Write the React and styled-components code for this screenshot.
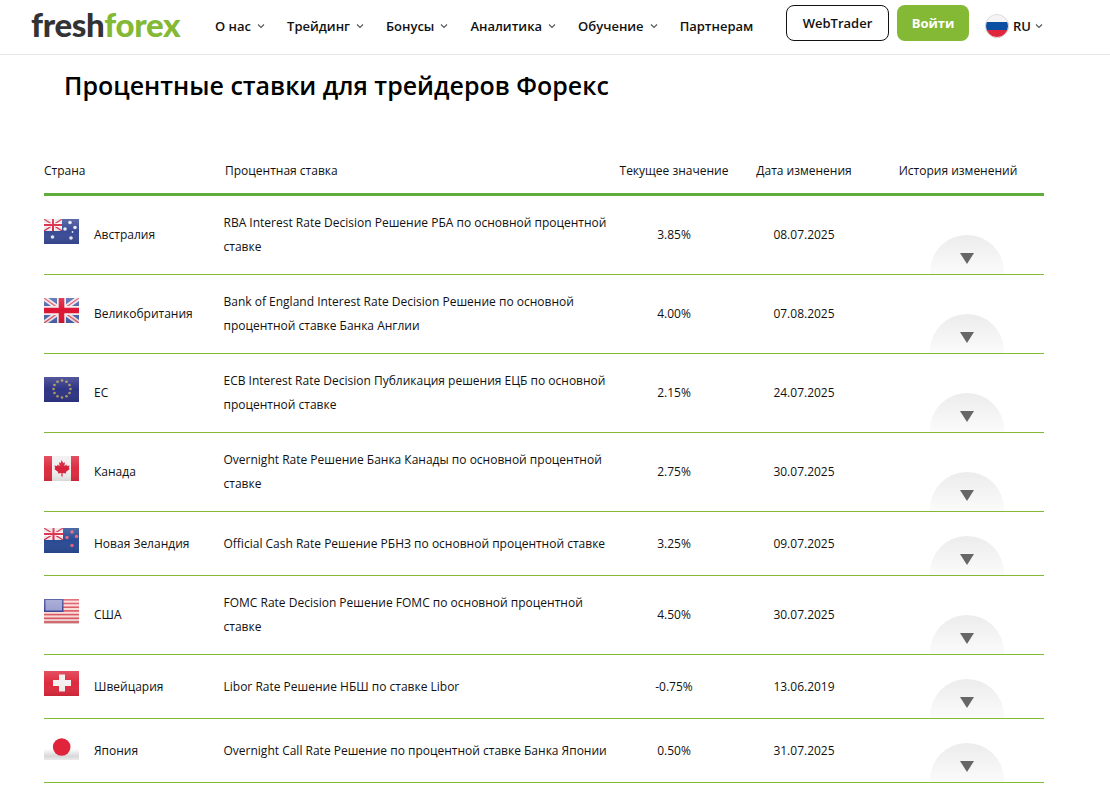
import React from 'react';
import styled, { createGlobalStyle } from 'styled-components';

const GlobalStyle = createGlobalStyle`
  html, body {
    margin: 0;
    padding: 0;
    background: #fff;
    color: #000;
    font-family: "Open Sans", "Noto Sans", sans-serif;
  }
`;

const Header = styled.header`
  height: 54px;
  border-bottom: 1px solid #e8e8e8;
  display: flex;
  align-items: center;
  padding-left: 31px;
`;

const Logo = styled.a`
  font-family: "Lato", "Open Sans", sans-serif;
  font-weight: 900;
  font-size: 33px;
  line-height: 1;
  letter-spacing: -0.3px;
  color: #333;
  width: 184px;
  margin-top: -6px;
  span { color: #84b935; }
`;

const Nav = styled.nav`
  display: flex;
  align-items: center;
  gap: 22px;
  width: 571px;
`;

const NavItem = styled.a`
  display: flex;
  align-items: center;
  gap: 6px;
  font-size: 13px;
  font-weight: 600;
  color: #111;
  margin-top: -3px;
`;

const Chevron = () => (
  <svg width="8" height="6" viewBox="0 0 8 6" fill="none" stroke="#555" strokeWidth="1.1">
    <path d="M1 1.5l3 3 3-3" />
  </svg>
);

const OutlineButton = styled.a`
  box-sizing: border-box;
  width: 103px;
  height: 36px;
  border: 1px solid #111;
  border-radius: 8px;
  display: flex;
  align-items: center;
  justify-content: center;
  font-size: 13px;
  font-weight: 600;
  color: #111;
  margin-top: -9px;
`;

const LoginButton = styled.a`
  width: 72px;
  height: 36px;
  margin-left: 8px;
  margin-top: -9px;
  border-radius: 8px;
  background: #84b935;
  color: #fff;
  display: flex;
  align-items: center;
  justify-content: center;
  font-size: 13px;
  font-weight: 700;
`;

const Lang = styled.div`
  display: flex;
  align-items: center;
  gap: 4px;
  margin-left: 16px;
  margin-top: -2px;
  font-size: 13px;
  font-weight: 600;
  color: #111;
`;

const Title = styled.h1`
  margin: 0;
  padding: 13px 0 0 64px;
  font-size: 25px;
  line-height: 34px;
  font-weight: 600;
  color: #000;
`;

const Table = styled.div`
  margin: 44px 66px 0 44px;
`;

const columns = '180px 387px 126px 134px 173px';

const HeadRow = styled.div`
  display: grid;
  grid-template-columns: ${columns};
  height: 50px;
  padding-top: 2px;
  align-items: center;
  border-bottom: 3px solid #5fae3c;
  font-size: 12px;
  color: #111;
  box-sizing: border-box;
`;

const HeadCell = styled.div`
  text-align: ${props => (props.$center ? 'center' : 'left')};
  padding-left: ${props => props.$indent || 0}px;
  white-space: nowrap;
`;

const Row = styled.div`
  display: grid;
  grid-template-columns: ${columns};
  min-height: 63px;
  align-items: center;
  border-bottom: 1px solid #84b935;
  font-size: 12px;
  color: #111;
`;

const Country = styled.div`
  display: flex;
  align-items: center;
  padding-bottom: 1px;
`;

const FlagBox = styled.div`
  width: 35px;
  height: 25px;
  margin-right: 15px;
  position: relative;
  top: -3px;
  svg { display: block; }
`;

const RateName = styled.div`
  line-height: 24px;
  padding: 15px 0;
  margin-left: -0.5px;
`;

const Value = styled.div`
  text-align: center;
  padding-bottom: 1px;
`;

const ToggleCell = styled.div`
  align-self: end;
  display: flex;
  justify-content: center;
  padding-left: 18px;
`;

const Toggle = styled.button`
  width: 74px;
  height: 39px;
  border: 0;
  padding: 18px 0 10px;
  border-radius: 37px 37px 0 0;
  background: linear-gradient(#ececec, #fbfbfb);
  display: block;
`;

const Triangle = styled.span`
  display: block;
  margin: 0 auto;
  width: 0;
  height: 0;
  border-left: 7.5px solid transparent;
  border-right: 7.5px solid transparent;
  border-top: 11px solid #666;
`;

const Gloss = () => (
  <>
    <defs>
      <linearGradient id="gloss" x1="0" y1="0" x2="0" y2="1">
        <stop offset="0" stopColor="#fff" stopOpacity="0.18" />
        <stop offset="0.5" stopColor="#fff" stopOpacity="0" />
        <stop offset="1" stopColor="#000" stopOpacity="0.1" />
      </linearGradient>
    </defs>
    <rect width="35" height="25" fill="url(#gloss)" />
  </>
);

const Stars = ({ points, fill, r = 1.3 }) =>
  points.map(([x, y], i) => <circle key={i} cx={x} cy={y} r={r} fill={fill} />);

const Jack = ({ w = 18, h = 12 }) => (
  <svg x="0" y="0" width={w} height={h} viewBox="0 0 18 12" preserveAspectRatio="none">
    <rect width="18" height="12" fill="#e9e6ea" />
    <path d="M0 0L18 12M18 0L0 12" stroke="#d8233f" strokeWidth="1.2" />
    <path d="M9 0V12M0 6H18" stroke="#fff" strokeWidth="3.4" />
    <path d="M9 0V12M0 6H18" stroke="#d8233f" strokeWidth="2" />
  </svg>
);

const flags = {
  au: (
    <>
      <rect width="35" height="25" fill="#3a4b96" />
      <Jack />
      <Stars points={[[8.5, 18], [26, 3.5], [31, 8.5], [21, 10], [27, 19]]} fill="#e6e9f4" r={1.8} />
      <circle cx="28.5" cy="13" r="0.9" fill="#e6e9f4" />
    </>
  ),
  gb: (
    <>
      <rect width="35" height="25" fill="#4a63ad" />
      <path d="M0 0L35 25M35 0L0 25" stroke="#f0e4e6" strokeWidth="5" />
      <path d="M0 0L35 25M35 0L0 25" stroke="#e0526a" strokeWidth="1.2" />
      <path d="M17.5 0V25M0 12.5H35" stroke="#f3eeee" strokeWidth="9" />
      <path d="M17.5 0V25M0 12.5H35" stroke="#dc1433" strokeWidth="5.6" />
    </>
  ),
  eu: (
    <>
      <rect width="35" height="25" fill="#2f3485" />
      <Stars
        points={[[18, 3.5], [22.5, 4.7], [25.5, 8], [26.5, 12], [25.5, 16], [22.5, 19.3], [18, 20.5], [13.5, 19.3], [10.5, 16], [9.5, 12], [10.5, 8], [13.5, 4.7]]}
        fill="#a99d5c"
      />
    </>
  ),
  ca: (
    <>
      <rect width="35" height="25" fill="#f1eeee" />
      <rect width="8" height="25" fill="#dd2c40" />
      <rect x="27" width="8" height="25" fill="#dd2c40" />
      <path d="M17.5 4l1.8 3 1.7-.8-.6 4 2-1.6.6 1.4 2.6-.4-.8 2.6 1 .7-4 3.2.4 1.4-3.6-.5v3.5h-1.2v-3.5l-3.6.5.4-1.4-4-3.2 1-.7-.8-2.6 2.6.4.6-1.4 2 1.6-.6-4 1.7.8z" fill="#d8203a" />
    </>
  ),
  nz: (
    <>
      <rect width="35" height="25" fill="#2a4a94" />
      <Jack w={19} h={12} />
      <Stars points={[[28, 4], [32.5, 8.5], [23, 9.5], [28, 17.5]]} fill="#e8607a" r={1.7} />
    </>
  ),
  us: (
    <>
      <rect width="35" height="25" fill="#f9dcd8" />
      {[0, 1, 2, 3, 4, 5, 6].map(i => (
        <rect key={i} y={i * 3.7} width="35" height="1.6" fill="#dc5563" />
      ))}
      <rect width="19.5" height="13" fill="#3d4796" />
      <rect x="1.5" y="1" width="16.5" height="10.5" fill="#9a9fd0" />
    </>
  ),
  ch: (
    <>
      <rect width="35" height="25" fill="#dd2a3e" />
      <path d="M15 3.5h6v5.5h6v6h-6v5.5h-6V15H9V9h6z" fill="#f4f0f0" />
    </>
  ),
  jp: (
    <>
      <defs>
        <linearGradient id="jpbg" x1="0" y1="0" x2="0" y2="1">
          <stop offset="0" stopColor="#fff" />
          <stop offset="0.55" stopColor="#fff" />
          <stop offset="0.85" stopColor="#d8d8d8" />
          <stop offset="1" stopColor="#ececec" />
        </linearGradient>
      </defs>
      <rect width="35" height="25" fill="url(#jpbg)" />
      <circle cx="17.7" cy="12" r="8.8" fill="#e0243c" />
    </>
  ),
};

const Flag = ({ code }) => (
  <svg width="35" height="25" viewBox="0 0 35 25">
    {flags[code]}
    {code !== 'jp' && <Gloss />}
  </svg>
);

const RussianFlag = () => (
  <svg width="24" height="24" viewBox="0 0 24 24">
    <defs>
      <clipPath id="ruclip"><circle cx="12" cy="12" r="11.5" /></clipPath>
    </defs>
    <g clipPath="url(#ruclip)">
      <rect width="24" height="8" fill="#f4f4f4" />
      <rect y="8" width="24" height="8" fill="#0b4ea2" />
      <rect y="16" width="24" height="8" fill="#e0263c" />
    </g>
    <circle cx="12" cy="12" r="11.5" fill="none" stroke="#ddd" />
  </svg>
);

const menu = [
  { label: 'О нас', arrow: true },
  { label: 'Трейдинг', arrow: true },
  { label: 'Бонусы', arrow: true },
  { label: 'Аналитика', arrow: true },
  { label: 'Обучение', arrow: true },
  { label: 'Партнерам' },
];

const rates = [
  { code: 'au', country: 'Австралия', name: 'RBA Interest Rate Decision Решение РБА по основной процентной ставке', value: '3.85%', date: '08.07.2025' },
  { code: 'gb', country: 'Великобритания', name: 'Bank of England Interest Rate Decision Решение по основной процентной ставке Банка Англии', value: '4.00%', date: '07.08.2025' },
  { code: 'eu', country: 'ЕС', name: 'ECB Interest Rate Decision Публикация решения ЕЦБ по основной процентной ставке', value: '2.15%', date: '24.07.2025' },
  { code: 'ca', country: 'Канада', name: 'Overnight Rate Решение Банка Канады по основной процентной ставке', value: '2.75%', date: '30.07.2025' },
  { code: 'nz', country: 'Новая Зеландия', name: 'Official Cash Rate Решение РБНЗ по основной процентной ставке', value: '3.25%', date: '09.07.2025' },
  { code: 'us', country: 'США', name: 'FOMC Rate Decision Решение FOMC по основной процентной ставке', value: '4.50%', date: '30.07.2025' },
  { code: 'ch', country: 'Швейцария', name: 'Libor Rate Решение НБШ по ставке Libor', value: '-0.75%', date: '13.06.2019' },
  { code: 'jp', country: 'Япония', name: 'Overnight Call Rate Решение по процентной ставке Банка Японии', value: '0.50%', date: '31.07.2025' },
];

export default function App() {
  return (
    <>
      <GlobalStyle />
      <Header>
        <Logo>fresh<span>forex</span></Logo>
        <Nav>
          {menu.map(item => (
            <NavItem key={item.label}>
              {item.label}
              {item.arrow && <Chevron />}
            </NavItem>
          ))}
        </Nav>
        <OutlineButton>WebTrader</OutlineButton>
        <LoginButton>Войти</LoginButton>
        <Lang>
          <RussianFlag />
          RU
          <Chevron />
        </Lang>
      </Header>
      <Title>Процентные ставки для трейдеров Форекс</Title>
      <Table>
        <HeadRow>
          <HeadCell>Страна</HeadCell>
          <HeadCell $indent={1}>Процентная ставка</HeadCell>
          <HeadCell $center>Текущее значение</HeadCell>
          <HeadCell $center>Дата изменения</HeadCell>
          <HeadCell $center $indent={1}>История изменений</HeadCell>
        </HeadRow>
        {rates.map(rate => (
          <Row key={rate.code}>
            <Country>
              <FlagBox><Flag code={rate.code} /></FlagBox>
              {rate.country}
            </Country>
            <RateName>{rate.name}</RateName>
            <Value>{rate.value}</Value>
            <Value>{rate.date}</Value>
            <ToggleCell>
              <Toggle aria-label="Показать историю"><Triangle /></Toggle>
            </ToggleCell>
          </Row>
        ))}
      </Table>
    </>
  );
}
